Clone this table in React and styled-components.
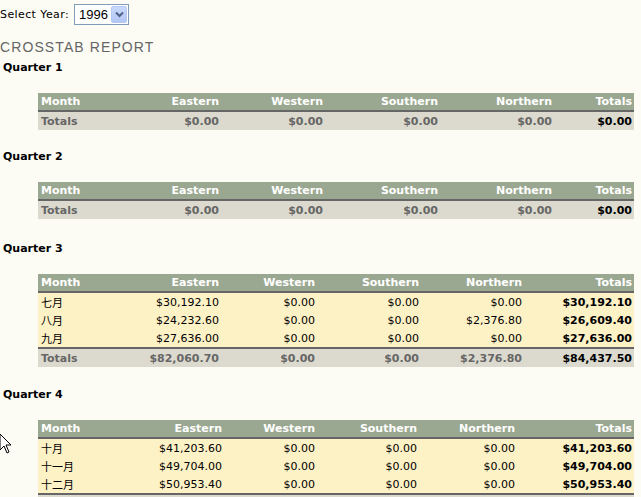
import React from 'react';
import styled, { createGlobalStyle } from 'styled-components';

const GlobalStyle = createGlobalStyle`
  html, body {
    margin: 0;
    padding: 0;
    background: #fcfcf4;
  }
  body {
    font-family: 'DejaVu Sans', Verdana, sans-serif;
    font-size: 11px;
    color: #000;
  }
`;

const Page = styled.div`
  position: relative;
  width: 641px;
  height: 497px;
  overflow: hidden;
`;

const TopBar = styled.div`
  display: flex;
  align-items: center;
  gap: 5px;
  padding-top: 4px;
  height: 21px;
`;

const Label = styled.span`
  font-size: 11px;
  letter-spacing: 0.4px;
`;

const YearSelect = styled.div`
  display: flex;
  align-items: stretch;
  width: 53px;
  height: 19px;
  border: 1px solid #7f9db9;
  background: #fff;
`;

const YearValue = styled.span`
  flex: 1;
  padding-left: 4px;
  font-family: 'Liberation Sans', Arial, sans-serif;
  font-size: 13px;
  line-height: 19px;
`;

const DropButton = styled.span`
  width: 16px;
  margin: 1px;
  border-radius: 2px;
  background: linear-gradient(#c9d9fc, #b2c6f5);
  border: 1px solid #b6c8f2;
  box-sizing: border-box;
  display: flex;
  align-items: center;
  justify-content: center;
`;

const Title = styled.div`
  margin-top: 14px;
  margin-bottom: 6px;
  font-family: 'Liberation Sans', Arial, sans-serif;
  font-size: 14px;
  line-height: 16px;
  letter-spacing: 1.1px;
  color: #666;
`;

const QuarterLabel = styled.div`
  padding: ${(p) => p.$pad}px 0 0 3px;
  font-weight: bold;
  line-height: 14px;
  margin-bottom: 18px;
`;

const Table = styled.table`
  margin-left: 38px;
  width: 596px;
  border-collapse: collapse;
  table-layout: fixed;
  margin-bottom: 20px;
`;

const Col = styled.col`
  width: ${(p) => p.$w}px;
`;

const HeadCell = styled.th`
  background: #9ba891;
  color: #fff;
  font-weight: bold;
  height: 17px;
  padding: 0 2px 0 3px;
  text-align: ${(p) => (p.$left ? 'left' : 'right')};
  border-bottom: 2px solid #666;
  white-space: nowrap;
`;

const Cell = styled.td`
  background: #fdf1c6;
  height: 18px;
  padding: 0 2px 0 3px;
  text-align: ${(p) => (p.$left ? 'left' : 'right')};
  font-weight: ${(p) => (p.$strong ? 'bold' : 'normal')};
  white-space: nowrap;
  font-family: 'DejaVu Sans', 'Noto Sans CJK SC', sans-serif;
`;

const TotalCell = styled.td`
  background: #dcdace;
  color: ${(p) => (p.$strong ? '#000' : '#666')};
  font-weight: bold;
  height: 18px;
  padding: 0 2px 0 3px;
  text-align: ${(p) => (p.$left ? 'left' : 'right')};
  border-top: 2px solid #666;
  white-space: nowrap;
`;

const Cursor = styled.svg`
  position: absolute;
  left: 0;
  top: 434px;
`;

const regions = ['Eastern', 'Western', 'Southern', 'Northern'];

const quarters = [
  {
    name: 'Quarter 1',
    pad: 0,
    widths: [90, 93, 104, 115, 114, 80],
    rows: [],
    totals: ['$0.00', '$0.00', '$0.00', '$0.00', '$0.00'],
  },
  {
    name: 'Quarter 2',
    pad: 0,
    widths: [90, 93, 104, 115, 114, 80],
    rows: [],
    totals: ['$0.00', '$0.00', '$0.00', '$0.00', '$0.00'],
  },
  {
    name: 'Quarter 3',
    pad: 3,
    widths: [90, 93, 96, 104, 103, 110],
    rows: [
      ['七月', '$30,192.10', '$0.00', '$0.00', '$0.00', '$30,192.10'],
      ['八月', '$24,232.60', '$0.00', '$0.00', '$2,376.80', '$26,609.40'],
      ['九月', '$27,636.00', '$0.00', '$0.00', '$0.00', '$27,636.00'],
    ],
    totals: ['$82,060.70', '$0.00', '$0.00', '$2,376.80', '$84,437.50'],
  },
  {
    name: 'Quarter 4',
    pad: 1,
    widths: [90, 96, 93, 102, 98, 117],
    rows: [
      ['十月', '$41,203.60', '$0.00', '$0.00', '$0.00', '$41,203.60'],
      ['十一月', '$49,704.00', '$0.00', '$0.00', '$0.00', '$49,704.00'],
      ['十二月', '$50,953.40', '$0.00', '$0.00', '$0.00', '$50,953.40'],
    ],
    totals: ['$141,861.00', '$0.00', '$0.00', '$0.00', '$141,861.00'],
  },
];

function QuarterTable({ q }) {
  return (
    <>
      <QuarterLabel $pad={q.pad}>{q.name}</QuarterLabel>
      <Table>
        <colgroup>
          {q.widths.map((w, i) => (
            <Col key={i} $w={w} />
          ))}
        </colgroup>
        <thead>
          <tr>
            <HeadCell $left>Month</HeadCell>
            {regions.map((r) => (
              <HeadCell key={r}>{r}</HeadCell>
            ))}
            <HeadCell>Totals</HeadCell>
          </tr>
        </thead>
        <tbody>
          {q.rows.map((row) => (
            <tr key={row[0]}>
              {row.map((v, i) => (
                <Cell key={i} $left={i === 0} $strong={i === 5}>
                  {v}
                </Cell>
              ))}
            </tr>
          ))}
          <tr>
            <TotalCell $left>Totals</TotalCell>
            {q.totals.map((v, i) => (
              <TotalCell key={i} $strong={i === 4}>
                {v}
              </TotalCell>
            ))}
          </tr>
        </tbody>
      </Table>
    </>
  );
}

export default function App() {
  return (
    <Page>
      <GlobalStyle />
      <TopBar>
        <Label>Select Year:</Label>
        <YearSelect>
          <YearValue>1996</YearValue>
          <DropButton>
            <svg width="9" height="7" viewBox="0 0 9 7">
              <path d="M1 1.5 L4.5 5 L8 1.5" stroke="#4d6185" strokeWidth="2" fill="none" />
            </svg>
          </DropButton>
        </YearSelect>
      </TopBar>
      <Title>CROSSTAB REPORT</Title>
      {quarters.map((q) => (
        <QuarterTable key={q.name} q={q} />
      ))}
      <Cursor width="12" height="20" viewBox="0 0 12 20">
        <path d="M0 0 L0 16 L4 12 L7 19 L9 18 L6 11 L11 11 Z" fill="#fff" stroke="#000" strokeWidth="1" />
      </Cursor>
    </Page>
  );
}
